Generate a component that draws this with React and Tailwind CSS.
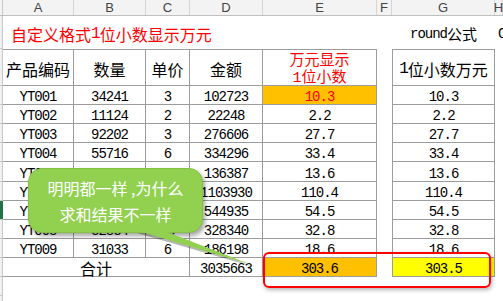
import React from 'react'

const rows = [
  { code: 'YT001', qty: '34241', price: '3', amt: '102723', wan: '10.3', rnd: '10.3', hi: true },
  { code: 'YT002', qty: '11124', price: '2', amt: '22248', wan: '2.2', rnd: '2.2' },
  { code: 'YT003', qty: '92202', price: '3', amt: '276606', wan: '27.7', rnd: '27.7' },
  { code: 'YT004', qty: '55716', price: '6', amt: '334296', wan: '33.4', rnd: '33.4' },
  { code: 'YT005', qty: '4703', price: '29', amt: '136387', wan: '13.6', rnd: '13.6', tall: true },
  { code: 'YT006', qty: '110393', price: '10', amt: '1103930', wan: '110.4', rnd: '110.4' },
  { code: 'YT007', qty: '36329', price: '15', amt: '544935', wan: '54.5', rnd: '54.5', active: true },
  { code: 'YT008', qty: '32834', price: '10', amt: '328340', wan: '32.8', rnd: '32.8' },
  { code: 'YT009', qty: '31033', price: '6', amt: '186198', wan: '18.6', rnd: '18.6' },
]

const num = "font-['Liberation_Mono',monospace] text-[14px] leading-[13px] tracking-[-1px] text-black !pt-[5px]"
const cjk = "font-['Noto_Sans_CJK_SC',sans-serif]"
const cell = 'flex shrink-0 items-center justify-center border-r border-b border-[#9c9c9c] pt-[2px]'

function Strip({ active }) {
  return (
    <div
      className={`w-[3px] shrink-0 border-b border-[#c8c8c8] ${
        active ? 'bg-[#217346]' : 'bg-[#f0f0f0] border-r'
      }`}
    />
  )
}

function ColHead({ w, children }) {
  return (
    <div className={`${w} shrink-0 flex items-center justify-center border-r border-[#d5d5d5] font-['Liberation_Sans',sans-serif] text-[13px] text-[#444]`}>
      {children}
    </div>
  )
}

function DataRow({ r }) {
  return (
    <div className={`flex ${r.tall ? 'h-[20px]' : 'h-[19px]'}`}>
      <Strip active={r.active} />
      <div className={`${cell} ${num} w-[71px]`}>{r.code}</div>
      <div className={`${cell} ${num} w-[72px]`}>{r.qty}</div>
      <div className={`${cell} ${num} w-[44px]`}>{r.price}</div>
      <div className={`${cell} ${num} w-[73px]`}>{r.amt}</div>
      <div className={`${cell} ${num} w-[114px] ${r.hi ? 'bg-[#ffc000] !text-[#ff0000]' : ''}`}>{r.wan}</div>
      <div className="w-[15px] shrink-0" />
      <div className={`${cell} ${num} w-[103px] border-l`}>{r.rnd}</div>
    </div>
  )
}

export default function App() {
  return (
    <div className="relative w-[503px] h-[301px] overflow-hidden bg-white">
      {/* column letters */}
      <div className="flex h-[16px] bg-[#f3f3f3] border-b border-[#bfbfbf]">
        <div className="w-[3px] shrink-0 border-r border-[#c8c8c8]" />
        <ColHead w="w-[71px]">A</ColHead>
        <ColHead w="w-[72px]">B</ColHead>
        <ColHead w="w-[44px]">C</ColHead>
        <ColHead w="w-[73px]">D</ColHead>
        <ColHead w="w-[114px]">E</ColHead>
        <ColHead w="w-[15px]">F</ColHead>
        <ColHead w="w-[103px]">G</ColHead>
        <ColHead w="w-[8px]">H</ColHead>
      </div>

      {/* title row */}
      <div className="flex h-[33px]">
        <Strip />
        <div className={`w-[374px] shrink-0 flex items-center pl-[8px] pt-[3px] text-[16px] text-[#ff0000] ${cjk}`}>
          自定义格式<span className="font-['Liberation_Mono',monospace] tracking-[-1px]">1</span>位小数显示万元
        </div>
        <div className="w-[15px] shrink-0" />
        <div className="w-[103px] shrink-0 flex items-center justify-center pt-[3px] text-[15px] text-black">
          <span className="font-['Liberation_Mono',monospace] tracking-[-1px] text-[14px]">round</span>
          <span className={cjk}>公式</span>
        </div>
        <div className="flex-1 flex items-center pl-[3px] pt-[3px] font-['Liberation_Mono',monospace] text-[14px]">C</div>
      </div>

      {/* header row */}
      <div className="flex h-[37px]">
        <Strip />
        <div className={`${cell} border-t w-[71px] text-[16px] ${cjk}`}>产品编码</div>
        <div className={`${cell} border-t w-[72px] text-[16px] ${cjk}`}>数量</div>
        <div className={`${cell} border-t w-[44px] text-[16px] ${cjk}`}>单价</div>
        <div className={`${cell} border-t w-[73px] text-[16px] ${cjk}`}>金额</div>
        <div className={`${cell} border-t w-[114px] flex-col text-[15px] leading-[17px] text-[#ff0000] ${cjk}`}>
          <span>万元显示</span>
          <span>
            <span className="font-['Liberation_Mono',monospace]">1</span>位小数
          </span>
        </div>
        <div className="w-[15px] shrink-0" />
        <div className={`${cell} border-t border-l w-[103px] text-[16px] ${cjk}`}>
          <span className="font-['Liberation_Mono',monospace] tracking-[-1px]">1</span>位小数万元
        </div>
      </div>

      {rows.map((r) => (
        <DataRow key={r.code} r={r} />
      ))}

      {/* total row */}
      <div className="flex h-[19px]">
        <Strip />
        <div className={`${cell} w-[187px] text-[16px] ${cjk}`}>合计</div>
        <div className={`${cell} ${num} w-[73px]`}>3035663</div>
        <div className={`${cell} ${num} w-[114px] bg-[#ffc000]`}>303.6</div>
        <div className="w-[15px] shrink-0" />
        <div className={`${cell} ${num} w-[103px] border-l bg-[#ffff00]`}>303.5</div>
      </div>

      <div className="flex h-[19px]">
        <Strip />
      </div>
      <div className="flex h-[19px]">
        <Strip />
      </div>

      {/* callout bubble */}
      <div className={`absolute left-[28px] top-[168px] w-[175px] h-[65px] rounded-[14px] bg-[#92d050] border border-[#86c043] shadow-[2px_3px_4px_rgba(0,0,0,0.35)] flex flex-col items-center justify-center text-[16px] leading-[26px] text-white ${cjk}`}>
        <span>明明都一样 ,为什么</span>
        <span>求和结果不一样</span>
      </div>
      <svg className="absolute left-0 top-0 pointer-events-none" width="503" height="301">
        <polygon points="137,233 164,233 254,267" fill="rgba(0,0,0,0.28)" />
        <polygon points="135,230 162,230 252,265" fill="#92d050" />
      </svg>

      {/* red highlight */}
      <div className="absolute left-[263px] top-[252px] w-[228px] h-[36px] rounded-[6px] border-2 border-[#ff0000] shadow-[1px_2px_4px_rgba(0,0,0,0.3)]" />
    </div>
  )
}
